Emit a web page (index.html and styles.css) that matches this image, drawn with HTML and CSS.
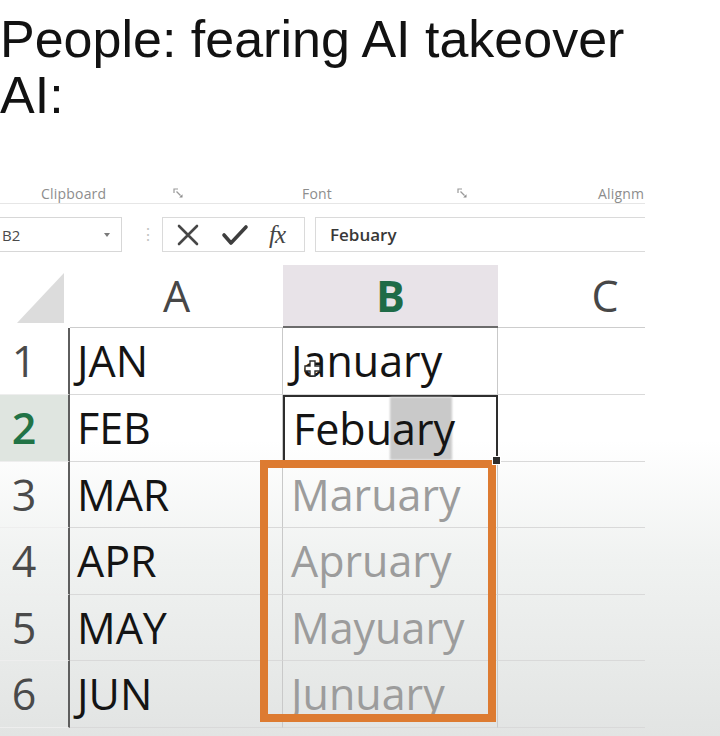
FILE: index.html
```html
<!DOCTYPE html>
<html lang="en">
<head>
<meta charset="utf-8">
<title>People: fearing AI takeover</title>
<link rel="stylesheet" href="styles.css">
</head>
<body>
<div class="page">
  <p class="caption">People: fearing AI takeover<br>AI:</p>

  <div class="excel">
    <div class="ribbon-groups">
      <span class="group-label">Clipboard</span>
      <span class="launcher"><svg width="11" height="11" viewBox="0 0 11 11"><path d="M1 5V1h4" fill="none" stroke="#9a9a9a" stroke-width="1.2"/><path d="M3.5 3.5l4 4" stroke="#9a9a9a" stroke-width="1.2"/><path d="M9.5 9.5H6.2l3.3-3.3z" fill="#8a8a8a"/></svg></span>
      <span class="group-label">Font</span>
      <span class="launcher"><svg width="11" height="11" viewBox="0 0 11 11"><path d="M1 5V1h4" fill="none" stroke="#9a9a9a" stroke-width="1.2"/><path d="M3.5 3.5l4 4" stroke="#9a9a9a" stroke-width="1.2"/><path d="M9.5 9.5H6.2l3.3-3.3z" fill="#8a8a8a"/></svg></span>
      <span class="group-label">Alignm</span>
    </div>

    <div class="formula-bar">
      <div class="name-box"><span class="name">B2</span><span class="dropdown"></span></div>
      <div class="grip">⋮</div>
      <div class="fx-box">
        <svg class="icon-cancel" width="24" height="24" viewBox="0 0 24 24"><path d="M3 3l18 18M21 3L3 21" stroke="#474747" stroke-width="2.6" stroke-linecap="round"/></svg>
        <svg class="icon-enter" width="28" height="22" viewBox="0 0 28 22"><path d="M3 11l7 8L25 3" fill="none" stroke="#3e3e3e" stroke-width="3.6" stroke-linecap="round" stroke-linejoin="round"/></svg>
        <span class="fx">fx</span>
      </div>
      <div class="formula-input">Febuary</div>
    </div>

    <div class="sheet">
      <div class="corner"><svg width="47" height="50" viewBox="0 0 47 50"><polygon points="47,0 47,50 0,50" fill="#dcdcdc"/></svg></div>
      <div class="col-head">A</div>
      <div class="col-head active">B</div>
      <div class="col-head">C</div>

      <div class="row-head">1</div>
      <div class="cell">JAN</div>
      <div class="cell cell-b">J<span class="cursor-host">a<svg class="cursor" width="17" height="17" viewBox="0 0 17 17"><path d="M6 1h5v5h5v5h-5v5H6v-5H1V6h5z" fill="#fff" stroke="#2e2e2e" stroke-width="1.4"/></svg></span>nuary</div>
      <div class="cell"></div>

      <div class="row-head active">2</div>
      <div class="cell">FEB</div>
      <div class="cell cell-b selected"><span class="caret-block"></span><span class="cell-text">Febuary</span></div>
      <div class="cell"></div>

      <div class="row-head">3</div>
      <div class="cell">MAR</div>
      <div class="cell cell-b ghost">Maruary</div>
      <div class="cell"></div>

      <div class="row-head">4</div>
      <div class="cell">APR</div>
      <div class="cell cell-b ghost">Apruary</div>
      <div class="cell"></div>

      <div class="row-head">5</div>
      <div class="cell">MAY</div>
      <div class="cell cell-b ghost">Mayuary</div>
      <div class="cell"></div>

      <div class="row-head">6</div>
      <div class="cell">JUN</div>
      <div class="cell cell-b ghost">Junuary</div>
      <div class="cell"></div>

      <div class="fill-range"></div>
    </div>
  </div>
</div>
</body>
</html>
```

FILE: styles.css
```css
* { box-sizing: border-box; }

html, body {
  margin: 0;
  padding: 0;
}

body {
  width: 720px;
  height: 736px;
  overflow: hidden;
  background: linear-gradient(180deg, #ffffff 0px, #ffffff 440px, #f0f2f1 560px, #e2e4e3 736px);
  font-family: "Open Sans", "Liberation Sans", sans-serif;
}

.page {
  width: 720px;
  height: 736px;
  overflow: hidden;
}

.caption {
  margin: 0;
  padding-top: 11px;
  font-family: "Liberation Sans", Arial, sans-serif;
  font-size: 52px;
  line-height: 56px;
  color: #121212;
  white-space: nowrap;
}

.excel {
  width: 645px;
  overflow: hidden;
  margin-top: 60px;
}

/* ribbon group captions */
.ribbon-groups {
  display: grid;
  grid-template-columns: 132px 129px 155px 141px auto;
  align-items: center;
  height: 21px;
  padding-left: 41px;
  border-bottom: 1px solid #e6e6e6;
}

.group-label {
  font-size: 14px;
  color: #8d8d8d;
  letter-spacing: 0.2px;
  white-space: nowrap;
}

.launcher {
  display: flex;
  align-items: center;
}

/* formula bar */
.formula-bar {
  display: flex;
  align-items: center;
  height: 35px;
  margin-top: 13px;
}

.name-box {
  display: flex;
  align-items: center;
  margin-left: -10px;
  width: 132px;
  height: 35px;
  padding-left: 11px;
  border: 1px solid #d7d7d7;
}

.name {
  font-size: 15px;
  color: #4a4a4a;
}

.dropdown {
  margin-left: auto;
  margin-right: 11px;
  width: 0;
  height: 0;
  border-left: 3px solid transparent;
  border-right: 3px solid transparent;
  border-top: 4px solid #7a7a7a;
}

.grip {
  width: 8px;
  margin-left: 18px;
  font-size: 16px;
  color: #c4c4c4;
  text-align: center;
  line-height: 35px;
}

.fx-box {
  display: flex;
  align-items: center;
  margin-left: 14px;
  width: 143px;
  height: 35px;
  border: 1px solid #dadada;
}

.icon-cancel { margin-left: 13px; }
.icon-enter { margin-left: 21px; }

.fx {
  margin-left: 20px;
  font-family: "Liberation Serif", "Times New Roman", serif;
  font-style: italic;
  font-size: 25px;
  color: #454545;
  letter-spacing: -1px;
}

.formula-input {
  flex: 1;
  margin-left: 10px;
  height: 35px;
  padding-left: 14px;
  border: 1px solid #dadada;
  border-right: none;
  font-size: 17px;
  font-weight: 600;
  line-height: 33px;
  color: #383838;
}

/* sheet grid */
.sheet {
  position: relative;
  display: grid;
  grid-template-columns: 70px 213px 215px 214px;
  grid-template-rows: 63px 67px 67px 66px 67px 66px 67px;
  width: 712px;
  margin-top: 13px;
  font-size: 43px;
}

.corner {
  display: flex;
  justify-content: flex-end;
  align-items: flex-end;
  padding: 0 6px 5px 0;
}

.col-head {
  text-align: center;
  line-height: 62px;
  color: #474747;
  border-bottom: 1px solid #cdcdcd;
}

.col-head.active {
  background: #e8e3e8;
  color: #1f6b47;
  font-weight: 700;
  border-bottom: 2px solid #6c6c6c;
}

.row-head {
  padding-right: 20px;
  text-align: center;
  line-height: 66px;
  color: #4a4a4a;
  border-right: 2px solid #5e5e5e;
  border-bottom: 1px solid #eeeeee;
}

.row-head.active {
  background: #dfe5e0;
  color: #217346;
  font-weight: 600;
}

.cell {
  position: relative;
  padding-left: 7px;
  line-height: 66px;
  color: #141414;
  white-space: nowrap;
  border-right: 1px solid #c9c9c9;
  border-bottom: 1px solid #d9d9d9;
}

.cell-b { padding-left: 8px; }

.ghost { color: #9c9c9c; }

.cursor-host { position: relative; }

.cursor {
  position: absolute;
  left: 1px;
  top: 29px;
}

.selected {
  border: 2px solid #2e2e2e;
  padding-left: 8px;
  line-height: 63px;
}

.selected::after {
  content: "";
  position: absolute;
  right: -5px;
  bottom: -5px;
  width: 7px;
  height: 7px;
  background: #2e2e2e;
  border: 1px solid #ffffff;
  z-index: 3;
}

.caret-block {
  position: absolute;
  left: 105px;
  top: 0;
  width: 62px;
  height: 100%;
  background: #c9c9c9;
  filter: blur(1px);
}

.cell-text { position: relative; }

.fill-range {
  position: absolute;
  left: 260px;
  top: 195px;
  width: 236px;
  height: 262px;
  border: 8px solid #dd7b31;
  pointer-events: none;
}
```
